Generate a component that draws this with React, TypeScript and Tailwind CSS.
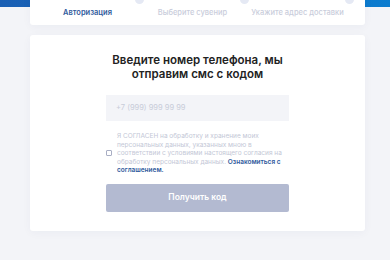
const steps = ['Авторизация', 'Выберите сувенир', 'Укажите адрес доставки'];

export default function App() {
  return (
    <div className="min-h-[260px] bg-[#f3f4f8] font-['Inter',sans-serif] overflow-hidden">
      <div className="h-[7px] bg-gradient-to-r from-[#1a5fb4] to-[#0b7ccf]" />

      {/* steps card */}
      <div className="relative ml-[30px] mr-[25px] -mt-[19px] rounded-[3px] bg-white pt-[7px] pb-[6px] shadow-[0_2px_10px_rgba(30,40,90,0.04)]">
        <div className="ml-[5px] w-[315px] grid grid-cols-3">
          {steps.map((s, i) => (
            <div key={s} className="flex flex-col">
              <div className="flex h-[9px] items-center">
                <div className={i === 0 ? 'ml-[5px] h-px flex-1 bg-[#b9c6e2]' : 'ml-[5px] h-px flex-1 bg-[#f1f3f8]'} />
                <div className="-mr-[4px] ml-[1px] h-[9px] w-[9px] rounded-full bg-[#e5e9f4]" />
              </div>
              <div
                className={
                  i === 0
                    ? 'mt-[3px] text-center text-[7.5px] leading-[12px] font-semibold text-[#2f5a9c]'
                    : 'mt-[3px] text-center text-[7.5px] leading-[12px] font-medium text-[#c9cddb]'
                }
              >
                {s}
              </div>
            </div>
          ))}
        </div>
      </div>

      {/* form card */}
      <div className="ml-[30px] mr-[25px] mt-[10px] rounded-[3px] bg-white pt-[18px] pb-[19px] shadow-[0_2px_10px_rgba(30,40,90,0.04)]">
        <h2 className="text-center text-[11.5px] leading-[14px] font-semibold text-[#222]">
          Введите номер телефона, мы
          <br />
          отправим смс с кодом
        </h2>

        <div className="mx-auto mt-[14px] w-[183px]">
          <div className="flex h-[26px] items-center bg-[#f3f4f8] px-[10px] text-[7.5px] text-[#c8ccd9]">
            +7 (999) 999 99 99
          </div>

          <label className="mt-[11px] flex items-center gap-[5px]">
            <span className="h-[6px] w-[6px] shrink-0 rounded-[1px] border border-[#a9aec4] bg-white" />
            <span className="text-[6.5px] leading-[8.5px] text-[#c3c7d6]">
              Я СОГЛАСЕН на обработку и хранение моих персональных данных, указанных мною в соответствии с
              условиями настоящего согласия на обработку персональных данных.{' '}
              <span className="font-semibold text-[#2f5a9c]">Ознакомиться с соглашением.</span>
            </span>
          </label>

          <button className="mt-[9px] flex h-[28px] w-full items-center justify-center rounded-[2px] bg-[#b3bad1] text-[8.5px] font-semibold text-white">
            Получить код
          </button>
        </div>
      </div>
    </div>
  );
}
